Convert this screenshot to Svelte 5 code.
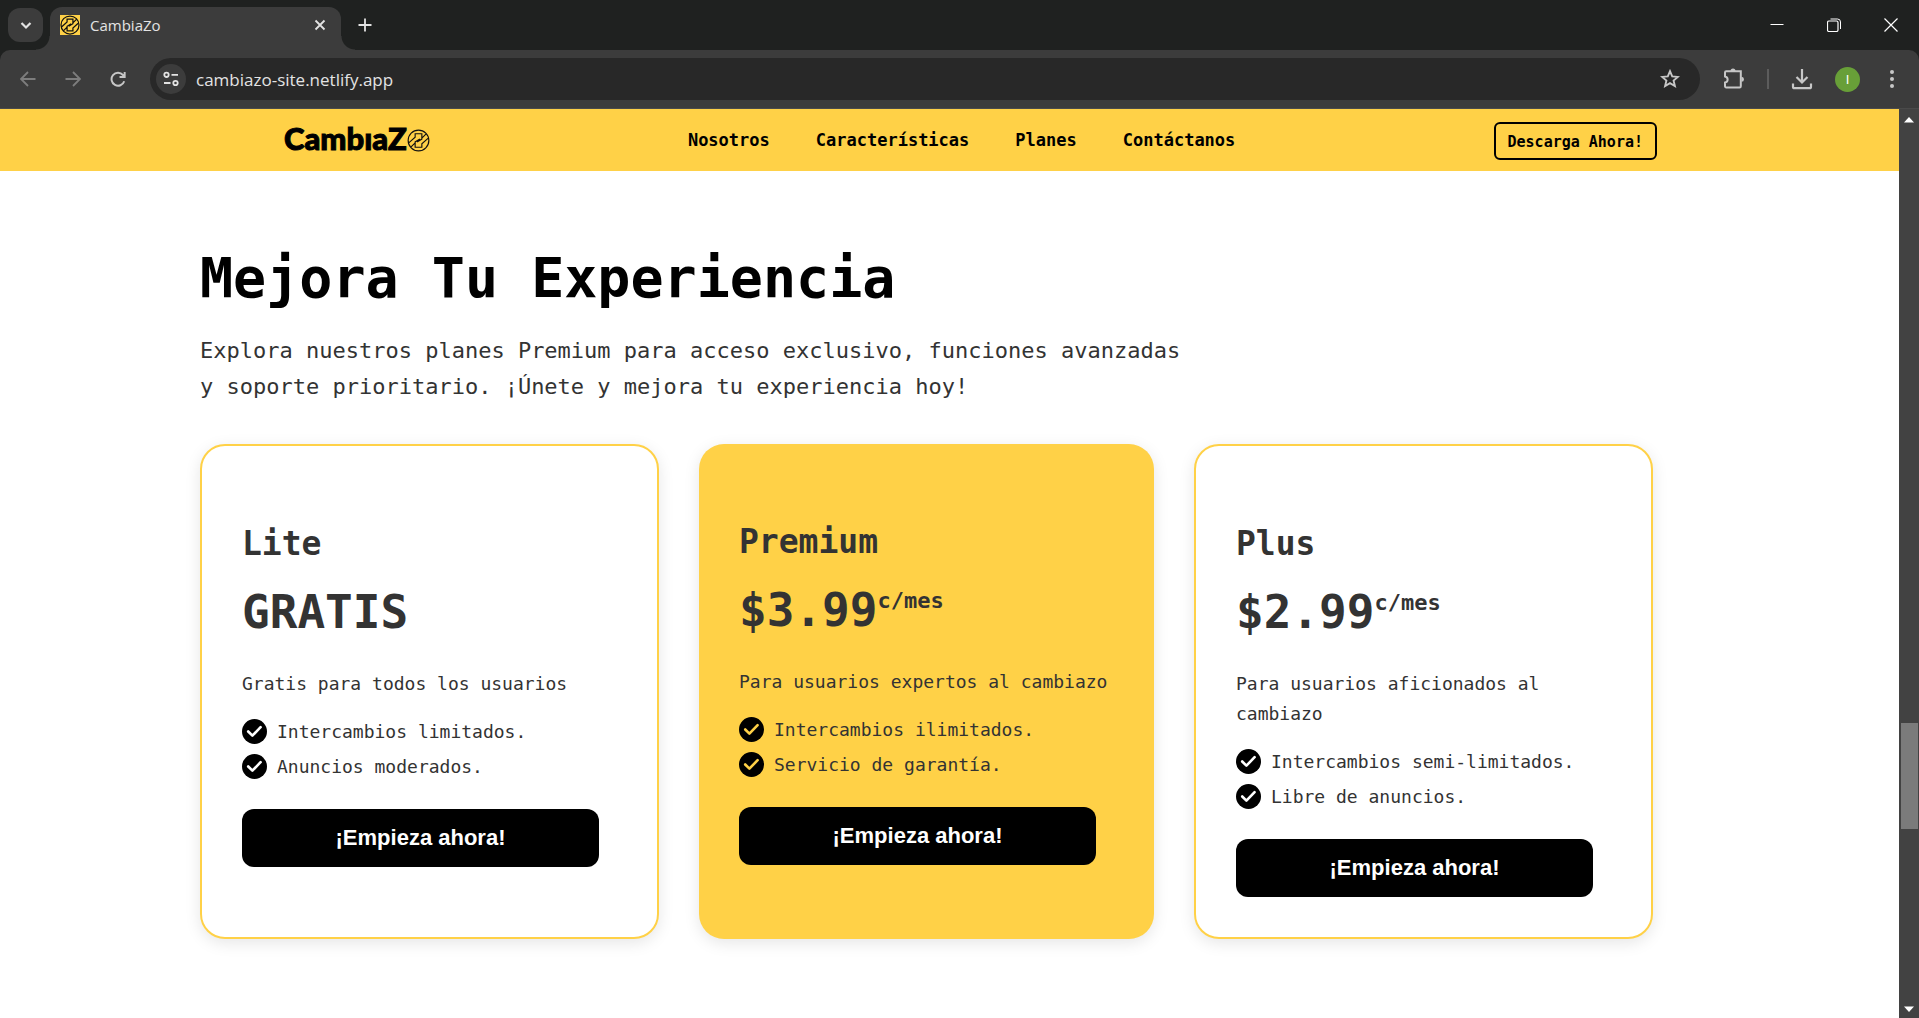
<script>
  const links = ['Nosotros', 'Características', 'Planes', 'Contáctanos'];
  const plans = [
    {
      name: 'Lite',
      price: 'GRATIS',
      unit: '',
      text: 'Gratis para todos los usuarios',
      features: ['Intercambios limitados.', 'Anuncios moderados.'],
      featured: false
    },
    {
      name: 'Premium',
      price: '$3.99',
      unit: 'c/mes',
      text: 'Para usuarios expertos al cambiazo',
      features: ['Intercambios ilimitados.', 'Servicio de garantía.'],
      featured: true
    },
    {
      name: 'Plus',
      price: '$2.99',
      unit: 'c/mes',
      text: 'Para usuarios aficionados al cambiazo',
      features: ['Intercambios semi-limitados.', 'Libre de anuncios.'],
      featured: false
    }
  ];
  let address = $state('cambiazo-site.netlify.app');
</script>

{#snippet coin()}
  <circle cx="12" cy="12" r="10.8" />
  <path d="M1.800 14.500 8.500 8.500V5H15.500V10.500L10.500 13.500M22.200 9.500 15.500 15.500V19H8.500V13.500L13.500 10.500M4 19 8.500 14.500M20 5 15.500 9.500" />
{/snippet}

<div class="window">
  <div class="frame">
    <div class="tabstrip">
      <button class="search" aria-label="Buscar pestañas">
        <svg width="16" height="16" viewBox="0 0 16 16"><path d="m3.500 6 4.500 4.500L12.500 6" stroke-width="2.200" /></svg>
      </button>
      <div class="tab">
        <svg class="favicon" width="20" height="20" viewBox="0 0 24 24">
          <rect width="24" height="24" />
          <g>{@render coin()}</g>
        </svg>
        <span class="tabname">CambiaZo</span>
        <button class="bare" aria-label="Cerrar pestaña">
          <svg width="12" height="12" viewBox="0 0 12 12"><path d="m1.500 1.500 9 9M10.500 1.500l-9 9" stroke-width="1.800" /></svg>
        </button>
      </div>
      <button class="bare newtab" aria-label="Nueva pestaña">
        <svg width="14" height="14" viewBox="0 0 14 14"><path d="M7 .5v13M.5 7h13" stroke-width="1.800" /></svg>
      </button>
      <div class="controls">
        <button class="bare" aria-label="Minimizar">
          <svg width="14" height="14" viewBox="0 0 14 14"><path d="M.5 6.500h13" stroke="#fff" stroke-width="1" /></svg>
        </button>
        <button class="bare" aria-label="Restaurar">
          <svg width="14" height="14" viewBox="0 0 14 14"><path d="M3.500 1h7a3 3 0 0 1 3 3v7" stroke="#fff" /><rect x=".5" y="3" width="10.500" height="10.500" rx="1.500" stroke="#fff" stroke-width="1.200" /></svg>
        </button>
        <button class="bare" aria-label="Cerrar">
          <svg width="14" height="14" viewBox="0 0 14 14"><path d="m.5.5 13 13M13.500.5l-13 13" stroke="#fff" stroke-width="1.200" /></svg>
        </button>
      </div>
    </div>

    <div class="toolbar">
      <button class="bare dim" aria-label="Atrás">
        <svg width="16" height="16" viewBox="0 0 16 16"><path d="M15.500 8H1.500M8 1 1 8l7 7" stroke-width="1.800" /></svg>
      </button>
      <button class="bare dim" aria-label="Adelante">
        <svg width="16" height="16" viewBox="0 0 16 16"><path d="M.5 8h14M8 1l7 7-7 7" stroke-width="1.800" /></svg>
      </button>
      <button class="bare" aria-label="Recargar">
        <svg width="16" height="16" viewBox="0 0 18 18"><path d="M16 11.500A7.300 7.300 0 1 1 14.600 4.500L16 6.200M16.500 1v5.800h-5.800" stroke-width="2.200" /></svg>
      </button>
      <div class="omnibox">
        <button class="site" aria-label="Información del sitio">
          <svg width="16" height="16" viewBox="0 0 16 16"><circle cx="3.500" cy="3.800" r="2.200" stroke-width="1.800" /><path d="M8.500 3.800H15M1 12h6.500" stroke-width="1.800" /><circle cx="12.500" cy="12" r="2.200" stroke-width="1.800" /></svg>
        </button>
        <input type="text" aria-label="Dirección" bind:value={address} />
        <button class="bare" aria-label="Añadir a marcadores">
          <svg width="20" height="20" viewBox="0 0 20 20"><path d="m10 2.200 2.200 5.200 5.700.5-4.300 3.700 1.300 5.500L10 14.200l-4.900 2.900 1.300-5.500L2.100 7.900l5.700-.5z" stroke-width="1.900" /></svg>
        </button>
      </div>
      <button class="bare" aria-label="Extensiones">
        <svg width="22" height="22" viewBox="0 0 22 22"><path d="M2 4.500A1.200 1.200 0 0 1 3.200 3.300H17.800V18.300A1.200 1.200 0 0 1 16.600 19.500H3.200A1.200 1.200 0 0 1 2 18.300V14.500C5.500 14 5.500 9 2 8.500Z" stroke-width="2" /><path class="solid" d="M7.500 3a2.500 2.500 0 0 1 5 0zM18.500 8.800a2.500 2.500 0 0 1 0 5z" /></svg>
      </button>
      <span class="rule"></span>
      <button class="bare" aria-label="Descargas">
        <svg width="22" height="22" viewBox="0 0 22 22"><path d="M11 1v13M5.500 9l5.500 5.500L16.500 9M2 15.500v3.200a1.500 1.500 0 0 0 1.500 1.500h15a1.500 1.500 0 0 0 1.500-1.500v-3.200" stroke-width="2.200" /></svg>
      </button>
      <button class="avatar" aria-label="Perfil">I</button>
      <button class="bare" aria-label="Menú">
        <svg class="dots" width="6" height="20" viewBox="0 0 6 20"><circle cx="3" cy="3" r="2" /><circle cx="3" cy="10" r="2" /><circle cx="3" cy="17" r="2" /></svg>
      </button>
    </div>
  </div>

  <div class="viewport">
    <div class="page">
      <header>
        <a class="logo" href="#inicio" aria-label="CambiaZo">
          <span>CambıaZ</span>
          <svg width="23" height="23" viewBox="0 0 24 24">{@render coin()}</svg>
        </a>
        <nav>
          {#each links as link}
            <a href={'#' + link.toLowerCase()}>{link}</a>
          {/each}
        </nav>
        <button class="download">Descarga Ahora!</button>
      </header>

      <main>
        <h1>Mejora Tu Experiencia</h1>
        <p class="intro">
          Explora nuestros planes Premium para acceso exclusivo, funciones avanzadas y soporte
          prioritario. ¡Únete y mejora tu experiencia hoy!
        </p>
        <div class="plans">
          {#each plans as plan}
            <article class:featured={plan.featured}>
              <h2>{plan.name}</h2>
              <p class="price">{plan.price}{#if plan.unit}<span class="unit">{plan.unit}</span>{/if}</p>
              <p class="text">{plan.text}</p>
              <ul>
                {#each plan.features as feature}
                  <li>
                    <svg width="25" height="25" viewBox="0 0 25 25">
                      <circle cx="12.500" cy="12.500" r="12.500" />
                      <path d="m6.200 12.500 4.200 4.200 8.200-8.500" />
                    </svg>
                    {feature}
                  </li>
                {/each}
              </ul>
              <button class="start">¡Empieza ahora!</button>
            </article>
          {/each}
        </div>
      </main>
    </div>

    <div class="scrollbar" aria-hidden="true">
      <svg width="10" height="6" viewBox="0 0 10 6"><path d="M0 5.500 5 0l5 5.500z" /></svg>
      <span class="above"></span>
      <span class="thumb"></span>
      <span class="below"></span>
      <svg width="10" height="6" viewBox="0 0 10 6"><path d="M0 .5 5 6l5-5.500z" /></svg>
    </div>
  </div>
</div>

<style>
  :global(body) {
    margin: 0;
    background: #fff;
  }

  button {
    padding: 0;
    border: 0;
    font: inherit;
    color: inherit;
    cursor: pointer;
  }

  svg {
    display: block;
    flex: none;
  }

  h1, h2, p, ul {
    margin: 0;
    padding: 0;
  }

  .window {
    display: flex;
    flex-direction: column;
    min-height: 100vh;
    font-family: 'DejaVu Sans Mono', monospace;
  }

  /* Browser frame */
  .frame {
    background: #1f2120;
    color: #e3e3e3;
    font-family: 'Open Sans', sans-serif;
  }

  .tabstrip,
  .toolbar {
    display: flex;
    align-items: center;
  }

  .frame svg {
    fill: none;
    stroke: currentColor;
  }

  .tabstrip {
    height: 50px;
    padding-left: 8px;
  }

  .bare {
    display: grid;
    place-items: center;
    background: none;
  }

  .search {
    display: grid;
    place-items: center;
    width: 35px;
    height: 34px;
    border-radius: 12px;
    background: #3c3c3c;
  }

  .tab {
    position: relative;
    display: flex;
    align-items: center;
    gap: 10px;
    box-sizing: border-box;
    align-self: flex-end;
    width: 291px;
    height: 43px;
    margin-left: 7px;
    padding: 0 15px 8px 10px;
    border-radius: 12px 12px 0 0;
    background: #3c3c3c;
  }

  .tab::before,
  .tab::after {
    content: '';
    position: absolute;
    bottom: 0;
    width: 14px;
    height: 14px;
  }

  .tab::before {
    right: 100%;
    background: radial-gradient(circle at 0 0, transparent 13px, #3c3c3c 14px);
  }

  .tab::after {
    left: 100%;
    background: radial-gradient(circle at 100% 0, transparent 13px, #3c3c3c 14px);
  }

  .frame .favicon rect {
    fill: #ffd147;
    stroke: none;
  }

  .favicon g {
    stroke: #111;
    stroke-width: 1.5;
  }

  .tabname {
    flex: 1;
    font-size: 15px;
  }

  .newtab {
    margin-left: 17px;
  }

  .controls {
    display: flex;
    gap: 43px;
    margin-left: auto;
    padding-right: 21px;
  }

  .toolbar {
    box-sizing: border-box;
    height: 59px;
    padding: 0 24px 0 20px;
    border-bottom: 1px solid #4a4a4a;
    border-radius: 10px 10px 0 0;
    background: #3c3c3c;
    color: #c7c7c7;
  }

  .dim {
    margin-right: 29px;
    color: #7d7d7d;
  }

  .omnibox {
    display: flex;
    align-items: center;
    flex: 1;
    height: 42px;
    margin: 0 23px 0 24px;
    padding: 0 20px 0 6px;
    border-radius: 21px;
    background: #282828;
  }

  .site {
    display: grid;
    place-items: center;
    width: 30px;
    height: 30px;
    border-radius: 50%;
    background: #3c3c3c;
    color: #e3e3e3;
  }

  input {
    flex: 1;
    min-width: 0;
    padding: 0 10px;
    border: 0;
    outline: 0;
    background: none;
    color: #e3e3e3;
    font-family: 'Open Sans', sans-serif;
    font-size: 17px;
  }

  .frame .solid {
    fill: currentColor;
    stroke: none;
  }

  .rule {
    width: 2px;
    height: 20px;
    margin: 0 22px;
    background: #5c5c5c;
  }

  .avatar {
    width: 25px;
    height: 25px;
    margin: 0 29px 0 22px;
    border-radius: 50%;
    background: #689f38;
    color: #fff;
    font-family: 'Liberation Sans', Arial, sans-serif;
    font-size: 13px;
    line-height: 25px;
  }

  .frame .dots {
    fill: currentColor;
    stroke: none;
  }

  .viewport {
    display: flex;
    flex: 1;
  }

  .page {
    flex: 1;
    min-width: 0;
  }

  .scrollbar {
    display: flex;
    flex-direction: column;
    align-items: center;
    width: 20px;
    padding: 8px 0 6px;
    box-sizing: border-box;
    background: #424242;
    fill: #fff;
  }

  .above {
    flex: 600;
  }

  .thumb {
    width: 17px;
    height: 106px;
    background: #7b7b7b;
  }

  .below {
    flex: 177;
  }

  /* Site header */
  header {
    display: flex;
    align-items: center;
    justify-content: space-between;
    height: 62px;
    padding: 0 242px 0 284px;
    background: #ffd147;
  }

  header a {
    color: #000;
    text-decoration: none;
  }

  .logo {
    display: flex;
    align-items: center;
    font-family: Lato, sans-serif;
    font-size: 31px;
    font-weight: 900;
    line-height: 40px;
  }

  .logo span {
    padding-bottom: 4px;
    -webkit-text-stroke: 1px #000;
  }

  .logo svg {
    fill: none;
    stroke: #111;
    stroke-width: 1.2;
  }

  nav {
    display: flex;
    gap: 46px;
    font-size: 17px;
    font-weight: 700;
  }

  .download {
    padding: 2px 12px 0;
    margin-top: 2px;
    border: 2px solid #000;
    border-radius: 6px;
    background: none;
    color: #000;
    font-size: 15px;
    font-weight: 700;
    line-height: 32px;
  }

  /* Plans */
  main {
    max-width: 1453px;
    padding: 72px 246px 72px 200px;
    color: #333;
  }

  h1 {
    color: #000;
    font-size: 55px;
    line-height: 70px;
  }

  .intro {
    max-width: 1000px;
    margin-top: 20px;
    font-size: 22px;
    line-height: 36px;
  }

  .plans {
    display: flex;
    gap: 40px;
    margin-top: 39px;
  }

  article {
    flex: 1 1 0;
    padding: 78px 40px 40px;
    border: 2px solid #ffd147;
    border-radius: 25px;
    background: #fff;
    box-shadow: 0 4px 16px rgba(0, 0, 0, 0.1);
  }

  .featured {
    border: 0;
    background: #ffd147;
  }

  h2 {
    font-size: 33px;
    line-height: 40px;
  }

  .price {
    display: flex;
    margin-top: 18px;
    font-size: 46px;
    font-weight: 700;
    line-height: 60px;
  }

  .unit {
    font-size: 22px;
    line-height: 42px;
  }

  .text {
    margin-top: 27px;
    font-size: 18px;
    line-height: 30px;
  }

  ul {
    display: flex;
    flex-direction: column;
    gap: 10px;
    margin-top: 20px;
    list-style: none;
  }

  li {
    display: flex;
    align-items: center;
    gap: 10px;
    font-size: 18px;
    line-height: 25px;
  }

  li path {
    fill: none;
    stroke: #fff;
    stroke-width: 2.6;
    stroke-linecap: round;
    stroke-linejoin: round;
  }

  .featured li path {
    stroke: #ffd147;
  }

  .start {
    width: calc(100% - 18px);
    height: 58px;
    margin-top: 30px;
    border-radius: 12px;
    background: #000;
    color: #fff;
    font-family: 'Liberation Sans', Arial, sans-serif;
    font-size: 22px;
    font-weight: 700;
  }
</style>
